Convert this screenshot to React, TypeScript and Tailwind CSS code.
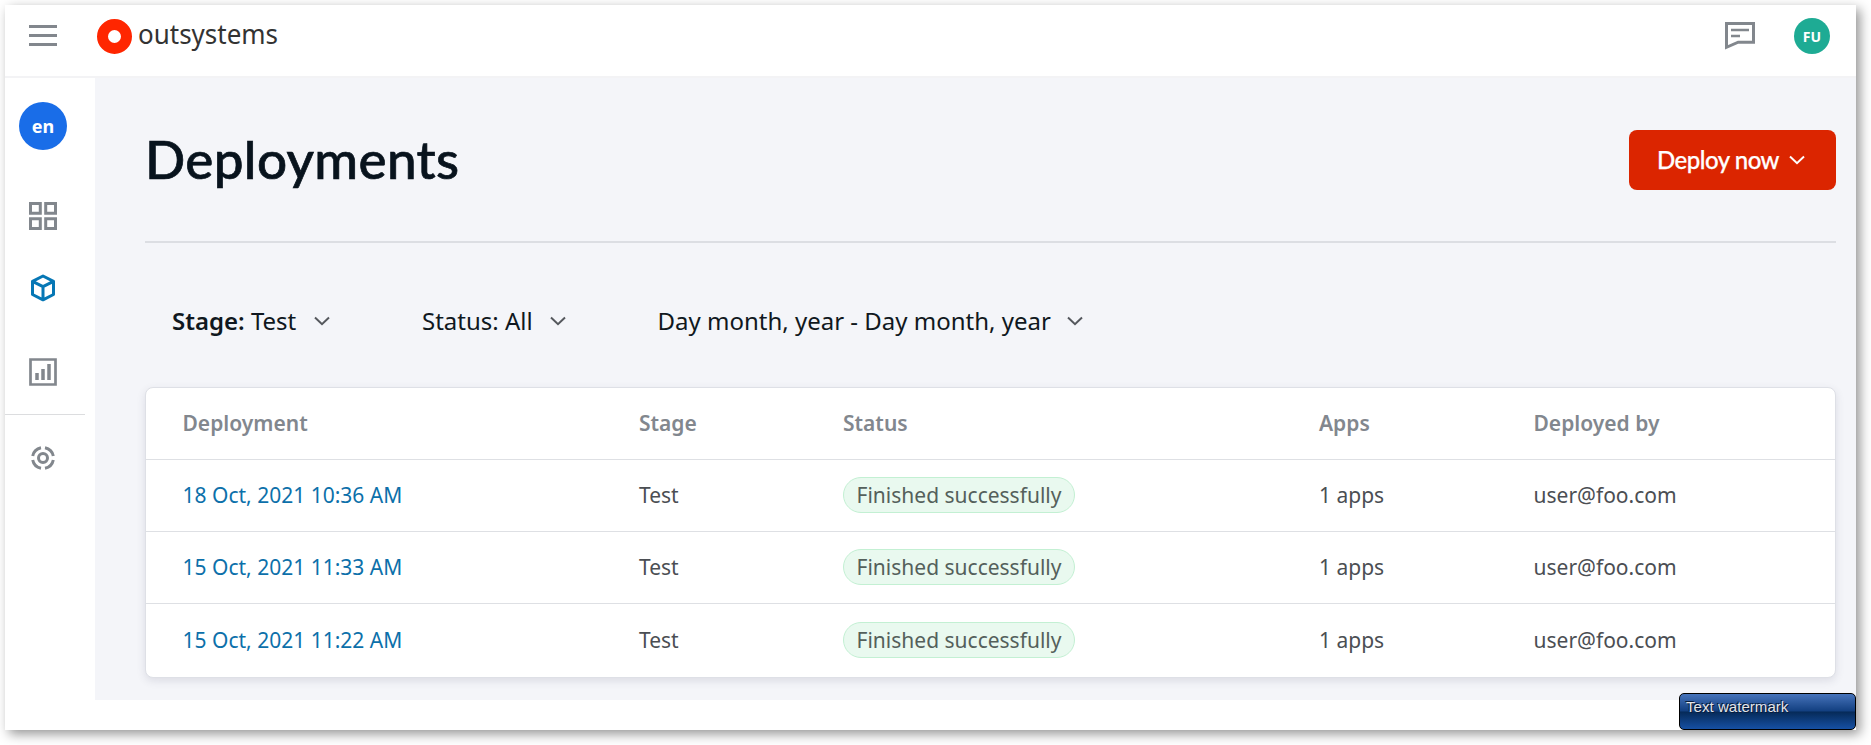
import React from "react";

const rows = ["18 Oct, 2021 10:36 AM", "15 Oct, 2021 11:33 AM", "15 Oct, 2021 11:22 AM"];
const columns = "grid grid-cols-[456.5px_204px_476px_214.5px_1fr] items-center pl-[36.5px]";

function Chevron({ className }: { className: string }) {
  return (
    <svg className={className} width="16" height="10" viewBox="0 0 16 10" fill="none" stroke="currentColor" strokeWidth="2">
      <path d="M1 1.5 8 8.2 15 1.5" />
    </svg>
  );
}

function Header() {
  return (
    <header className="flex h-[73px] shrink-0 items-start border-b-2 border-[#f3f3f5] pl-6 pr-[26px] pt-[13px]">
      <svg className="mt-[7px]" width="28" height="22" viewBox="0 0 28 22" fill="#82878d">
        <path d="M0 0h28v3H0zM0 9h28v3H0zM0 18h28v3H0z" />
      </svg>
      <svg className="ml-10 overflow-visible" width="210" height="48" viewBox="0 0 210 48">
        <circle cx="17.5" cy="18.5" r="12" fill="none" stroke="#ff2600" strokeWidth="11" />
        <text x="41" y="25.5" fontFamily="Noto Sans" fontSize="28" fill="#333" textLength="140" lengthAdjust="spacingAndGlyphs">
          outsystems
        </text>
      </svg>
      <div className="grow" />
      <svg className="mt-1" width="30" height="28" viewBox="0 0 30 28" fill="none" stroke="#82878d" strokeWidth="3">
        <path d="M1.5 25.3V1.5h27v18.7H13.2Z" />
        <path d="M6 8h18M6 14h9" strokeWidth="2.7" />
      </svg>
      <div className="ml-[39px] flex size-9 items-center justify-center rounded-full bg-[#1eab94] text-[14px] font-bold text-white">FU</div>
    </header>
  );
}

function Sidebar() {
  return (
    <nav className="flex w-[90px] shrink-0 flex-col text-[#82878d]">
      <div className="ml-[14px] mt-6 flex size-12 items-center justify-center rounded-full bg-[#196de8] text-[18px] font-bold text-white">en</div>
      <svg className="ml-6 mt-[52px]" width="28" height="28" fill="none" stroke="currentColor" strokeWidth="3">
        <path d="M1.5 1.5h9.8v9.8H1.5zM16.7 1.5h9.8v9.8h-9.8zM1.5 16.7h9.8v9.8H1.5zM16.7 16.7h9.8v9.8h-9.8z" />
      </svg>
      <svg className="ml-[26px] mt-11 text-[#0677b5]" width="24" height="28" fill="none" stroke="currentColor" strokeWidth="3" strokeLinejoin="round">
        <path d="m12 2 10.5 5.3v13.2L12 25.8 1.5 20.5V7.3ZM1.5 7.3 12 12.7l10.5-5.4M12 12.7v13" />
      </svg>
      <svg className="ml-6 mt-14" width="28" height="28" fill="none" stroke="currentColor" strokeWidth="2.7">
        <path d="M1.5 1.5h25v25h-25z" />
        <path d="M8 22v-7M14 22V11M20 22V6" strokeWidth="3.5" />
      </svg>
      <div className="mt-7 h-px w-20 bg-[#dcdddf]" />
      <svg className="ml-[26px] mt-[31px]" width="24" height="24" fill="none" stroke="currentColor" strokeWidth="3">
        <circle cx="12" cy="12" r="4.5" />
        <path d="M10 1.7A10.6 10.6 0 0 0 1.7 10M14 1.7A10.6 10.6 0 0 1 22.3 10M22.3 14a10.6 10.6 0 0 1-8.3 8.3M10 22.3A10.6 10.6 0 0 1 1.7 14" />
      </svg>
    </nav>
  );
}

export default function App() {
  return (
    <div className="h-[745px] w-full overflow-hidden bg-white pl-[5px] pr-[15px] pt-[5px] font-['Noto_Sans',sans-serif]">
      <div className="flex h-[725px] flex-col bg-white shadow-[4px_4px_11px_rgba(0,0,0,0.42)]">
        <Header />
        <div className="flex">
          <Sidebar />
          <main className="h-[622px] grow bg-[#f4f5f9] pl-[50px] pr-5">
            <div className="flex h-[165px] items-start justify-between border-b-2 border-[#dcdee3] pt-[52px]">
              <h1 className="-mt-px whitespace-nowrap font-['Lato',sans-serif] text-[53px] font-medium leading-[60px] tracking-[0.35px] text-[#08131d] [-webkit-text-stroke:0.7px_#08131d]">Deployments</h1>
              <button className="flex h-[60px] w-[207px] items-center rounded-lg bg-[#db2500] pl-7 text-white">
                <span className="whitespace-nowrap font-['Lato',sans-serif] text-[24px] font-medium tracking-[-0.5px] [-webkit-text-stroke:0.25px_white]">Deploy now</span>
                <Chevron className="ml-[10px]" />
              </button>
            </div>
            <div className="flex h-[144px] items-center pb-1 pl-[27px] pt-4 text-[24px] text-[#101820]">
              <div className="flex w-[250px] items-center whitespace-nowrap">
                <span><b className="font-semibold">Stage:</b> Test</span>
                <Chevron className="ml-[18px] text-[#55585d]" />
              </div>
              <div className="flex w-[235.5px] items-center whitespace-nowrap">
                Status: All
                <Chevron className="ml-[17px] text-[#55585d]" />
              </div>
              <div className="flex items-center whitespace-nowrap">
                Day month, year - Day month, year
                <Chevron className="ml-[16.5px] text-[#55585d]" />
              </div>
            </div>
            <section className="h-[291px] rounded-lg border border-[#dee0e6] bg-white text-[21px] text-[#4b4e53] shadow-[0_3px_9px_rgba(60,65,90,0.13)]">
              <div className={`${columns} h-[71px] font-semibold text-[#82878e]`}>
                <span>Deployment</span><span>Stage</span><span>Status</span><span>Apps</span><span>Deployed by</span>
              </div>
              {rows.map((date) => (
                <div key={date} className={`${columns} h-[72px] border-t border-[#dee0e4] last:h-[73px] last:pt-px`}>
                  <span className="text-[#0c70aa]">{date}</span>
                  <span>Test</span>
                  <span className="-mt-px flex h-9 w-[232px] items-center justify-center whitespace-nowrap rounded-full border border-[#c3f0d3] bg-[#e9f9ef] pt-0.5 text-[#54605b]">Finished successfully</span>
                  <span>1 apps</span>
                  <span>user@foo.com</span>
                </div>
              ))}
            </section>
          </main>
        </div>
        <div className="-mt-[7px] h-[37px] w-[177px] self-end rounded-[5px] border border-black bg-[linear-gradient(#4673bb_0%,#123f80_49%,#062a58_51%,#1650a3_100%)] pl-1.5 pt-[4px] font-['Liberation_Sans',sans-serif] text-[15px] leading-[18px] tracking-[0.05px] text-[#e4e5e8] [text-shadow:1px_1px_0_#071b3c,-1px_-1px_0_#071b3c]">Text watermark</div>
      </div>
    </div>
  );
}
